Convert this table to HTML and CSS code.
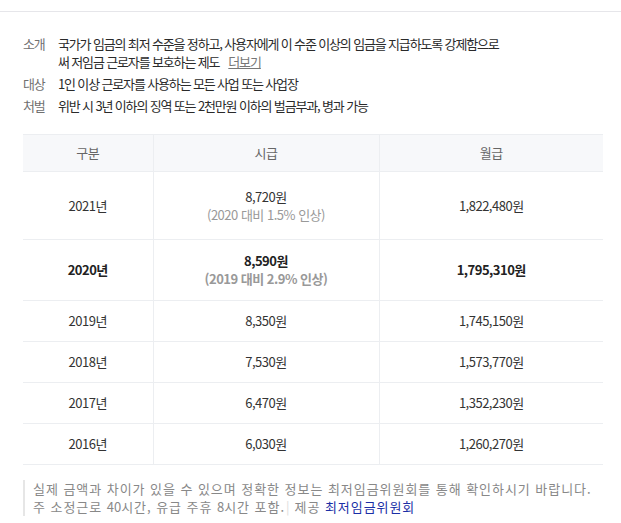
FILE: index.html
```html
<!DOCTYPE html>
<html lang="ko">
<head>
<meta charset="utf-8">
<link rel="stylesheet" href="styles.css">
</head>
<body>
<div class="topbar"></div>
<main class="content">
  <dl class="info">
    <div class="info-row">
      <dt>소개</dt>
      <dd><span>국가가 임금의 최저 수준을 정하고, 사용자에게 이 수준 이상의 임금을 지급하도록 강제함으로</span><span>써 저임금 근로자를 보호하는 제도</span><a class="more" href="#">더보기</a></dd>
    </div>
    <div class="info-row">
      <dt>대상</dt>
      <dd>1인 이상 근로자를 사용하는 모든 사업 또는 사업장</dd>
    </div>
    <div class="info-row">
      <dt>처벌</dt>
      <dd>위반 시 3년 이하의 징역 또는 2천만원 이하의 벌금부과, 병과 가능</dd>
    </div>
  </dl>

  <table class="wage">
    <colgroup>
      <col class="c1"><col class="c2"><col class="c3">
    </colgroup>
    <thead>
      <tr><th>구분</th><th>시급</th><th>월급</th></tr>
    </thead>
    <tbody>
      <tr class="first">
        <td>2021년</td>
        <td>8,720원<span class="sub">(2020 대비 1.5% 인상)</span></td>
        <td>1,822,480원</td>
      </tr>
      <tr class="current">
        <td>2020년</td>
        <td>8,590원<span class="sub">(2019 대비 2.9% 인상)</span></td>
        <td>1,795,310원</td>
      </tr>
      <tr><td>2019년</td><td>8,350원</td><td>1,745,150원</td></tr>
      <tr><td>2018년</td><td>7,530원</td><td>1,573,770원</td></tr>
      <tr><td>2017년</td><td>6,470원</td><td>1,352,230원</td></tr>
      <tr><td>2016년</td><td>6,030원</td><td>1,260,270원</td></tr>
    </tbody>
  </table>

  <p class="note">실제 금액과 차이가 있을 수 있으며 정확한 정보는 최저임금위원회를 통해 확인하시기 바랍니다.<br>주 소정근로 <span class="num">40</span>시간, 유급 주휴 <span class="num">8</span>시간 포함.<span class="sep">|</span>제공 <a class="source" href="#">최저임금위원회</a></p>
</main>
</body>
</html>
```

FILE: styles.css
```css
html, body {
  margin: 0;
  padding: 0;
  background: #fff;
}

body {
  font-family: "Noto Sans CJK KR", "Noto Sans", sans-serif;
  font-size: 13px;
  color: #333;
}

.topbar {
  height: 11px;
  border-bottom: 1px solid #e6e6ea;
}

.content {
  padding: 23px 18px 0 23px;
}

.info {
  margin: 0;
  display: flex;
  flex-direction: column;
  gap: 4px;
  font-feature-settings: "palt";
  letter-spacing: -1.15px;
  line-height: 18px;
}

.info-row {
  display: grid;
  grid-template-columns: 35px 1fr;
}

.info dt {
  color: #707070;
}

.info dd {
  margin: 0;
  color: #2a2a2a;
  max-width: 448px;
}

.more {
  display: inline-block;
  color: #777;
  text-decoration: underline;
  margin-left: 9px;
}

.wage {
  margin-top: 19px;
  width: 580px;
  border-collapse: collapse;
  table-layout: fixed;
  line-height: 18px;
  text-align: center;
  font-feature-settings: "palt";
  letter-spacing: -0.5px;
}

.c1 { width: 130px; }
.c2 { width: 226px; }
.c3 { width: 224px; }

.wage th {
  background: #f7f8fa;
  color: #666;
  font-weight: normal;
  padding: 9px 0;
  border-top: 1px solid #eceef1;
  border-bottom: 1px solid #eceef1;
}

.wage td {
  padding: 11px 0;
  color: #333;
  border-bottom: 1px solid #eceef1;
}

.wage th + th,
.wage td + td {
  border-left: 1px solid #eceef1;
}

.wage .sub {
  display: block;
  color: #999;
}

.wage tr.first td {
  padding: 16px 0 15px;
}

.wage tr.current td {
  padding: 12px 0;
  font-weight: bold;
  color: #222;
}

.wage tr.current .sub {
  color: #999;
}

.note {
  margin: 15px 0 0;
  padding-left: 8px;
  border-left: 2px solid #e6e6e6;
  color: #888;
  line-height: 18px;
  letter-spacing: 0.95px;
}

.note .num {
  letter-spacing: 0;
}

.sep {
  color: #ddd;
  margin: 0 4px 0 1px;
}

.source {
  color: #1b2fa6;
  text-decoration: none;
}
```
